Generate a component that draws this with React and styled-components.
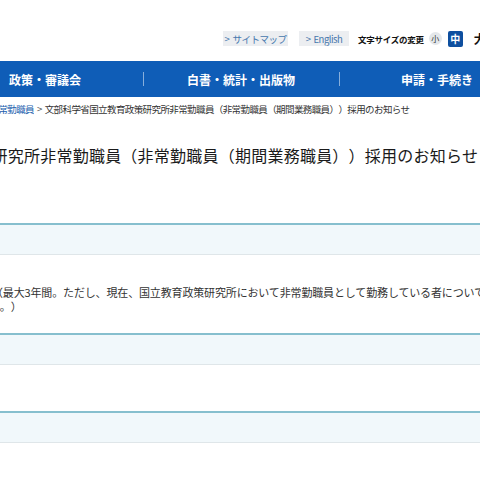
import React from "react";
import styled, { createGlobalStyle } from "styled-components";

const GlobalStyle = createGlobalStyle`
  html, body {
    margin: 0;
    padding: 0;
    background: #ffffff;
    overflow: hidden;
  }
  body {
    font-family: "Noto Sans CJK JP", "Noto Sans", sans-serif;
    color: #333333;
    text-spacing-trim: space-all;
  }
`;

// the page is wider than the window and scrolled sideways
const Page = styled.div`
  width: 980px;
  margin-left: -249px;
`;

const Header = styled.header`
  display: flex;
  align-items: center;
  height: 15px;
  padding-top: 31px;
`;

const Logo = styled.div`
  width: 460px;
  flex: none;
  padding-left: 10px;
  box-sizing: border-box;
  font-size: 14px;
  font-weight: 700;
  color: #222222;
`;

const UtilLinks = styled.div`
  display: flex;
  gap: 11px;
  margin-left: 12px;
`;

const UtilButton = styled.a`
  display: inline-flex;
  align-items: center;
  justify-content: center;
  gap: 3px;
  width: ${(p) => p.$w}px;
  height: 15px;
  background: #eceef1;
  color: #4677ad;
  font-size: 9.5px;
  letter-spacing: -0.5px;
  text-decoration: none;
  white-space: nowrap;
`;

const FontSize = styled.div`
  display: flex;
  align-items: center;
  margin-left: 9px;
`;

const FontLabel = styled.span`
  font-size: 8.5px;
  font-weight: 700;
  letter-spacing: -0.25px;
  color: #111111;
  margin-right: 5px;
  white-space: nowrap;
`;

const SizeSmall = styled.span`
  display: inline-flex;
  align-items: center;
  justify-content: center;
  width: 13px;
  height: 13px;
  border-radius: 50%;
  background: #e4e7ea;
  color: #333333;
  font-size: 8px;
  margin-right: 6px;
`;

const SizeMid = styled.span`
  display: inline-flex;
  align-items: center;
  justify-content: center;
  width: 15px;
  height: 16px;
  border-radius: 2px;
  background: #0e4f9f;
  color: #ffffff;
  font-size: 10px;
  font-weight: 700;
  margin-right: 11px;
`;

const SizeLarge = styled.span`
  font-size: 12px;
  font-weight: 700;
  color: #111111;
`;

const Nav = styled.nav`
  display: flex;
  height: 36px;
  margin-top: 15px;
  background: #0f5db7;
`;

const NavItem = styled.a`
  position: relative;
  flex: none;
  width: 196px;
  display: flex;
  align-items: center;
  justify-content: center;
  color: #ffffff;
  font-size: 12px;
  font-weight: 700;
  text-decoration: none;
  white-space: nowrap;

  & + &::before {
    content: "";
    position: absolute;
    left: 0;
    top: 11px;
    width: 1px;
    height: 14px;
    background: rgba(255, 255, 255, 0.5);
  }
`;

const Breadcrumb = styled.div`
  display: flex;
  align-items: center;
  height: 14px;
  padding-top: 5px;
  font-size: 9.5px;
  letter-spacing: -0.6px;
  white-space: nowrap;
`;

const Trail = styled.div`
  flex: none;
  width: 283px;
  display: flex;
  justify-content: flex-end;
  overflow: hidden;
`;

const Crumb = styled.a`
  color: #2160ad;
  text-decoration: none;
`;

const Sep = styled.span`
  margin: 0 3px;
  color: #555555;
`;

const Current = styled.span`
  color: #333333;
`;

const Title = styled.h1`
  margin: 27px 0 0;
  padding-left: 62px;
  font-size: 16px;
  font-weight: 400;
  line-height: 24px;
  letter-spacing: 0.23px;
  color: #1a1a1a;
  white-space: nowrap;
`;

const Sections = styled.div`
  margin-top: 56px;
`;

const Heading = styled.h2`
  margin: 0;
  height: 29px;
  padding-left: 72px;
  border-top: 2px solid #86bfce;
  border-bottom: 1px solid #dfe6e9;
  background: #f1f8fb;
  font-size: 12px;
  font-weight: 700;
  line-height: 29px;
  color: #333333;
`;

const Body = styled.div`
  min-height: ${(p) => p.$h}px;
  padding-left: 249px;
  box-sizing: border-box;
`;

const Para = styled.div`
  padding: ${(p) => p.$pad};
`;

const Line = styled.div`
  margin-left: ${(p) => p.$shift}px;
  font-size: 11px;
  line-height: 14px;
  letter-spacing: -0.15px;
  color: #333333;
  white-space: nowrap;
`;

export default function App() {
  return (
    <>
      <GlobalStyle />
      <Page>
        <Header>
          <Logo>文部科学省</Logo>
          <UtilLinks>
            <UtilButton href="#" $w={65}><span>&gt;</span>サイトマップ</UtilButton>
            <UtilButton href="#" $w={50}><span>&gt;</span>English</UtilButton>
          </UtilLinks>
          <FontSize>
            <FontLabel>文字サイズの変更</FontLabel>
            <SizeSmall>小</SizeSmall>
            <SizeMid>中</SizeMid>
            <SizeLarge>大</SizeLarge>
          </FontSize>
        </Header>

        <Nav>
          <NavItem href="#">報道・広報</NavItem>
          <NavItem href="#">政策・審議会</NavItem>
          <NavItem href="#">白書・統計・出版物</NavItem>
          <NavItem href="#">申請・手続き</NavItem>
          <NavItem href="#">文部科学省の紹介</NavItem>
        </Nav>

        <Breadcrumb>
          <Trail>
            <Crumb href="#">トップ</Crumb>
            <Sep>&gt;</Sep>
            <Crumb href="#">採用情報</Crumb>
            <Sep>&gt;</Sep>
            <Crumb href="#">非常勤職員</Crumb>
          </Trail>
          <Sep>&gt;</Sep>
          <Current>文部科学省国立教育政策研究所非常勤職員（非常勤職員（期間業務職員））採用のお知らせ</Current>
        </Breadcrumb>

        <Title>文部科学省国立教育政策研究所非常勤職員（非常勤職員（期間業務職員））採用のお知らせ</Title>

        <Sections>
          <Heading>募集内容</Heading>
          <Body $h={78}>
            <Para $pad="7px 0 9px">
              <Line $shift={-110}>任期あり</Line>
            </Para>
            <Para $pad="0 0 20px">
              <Line $shift={-8}>
                （最大3年間。ただし、現在、国立教育政策研究所において非常勤職員として勤務している者については、
              </Line>
              <Line $shift={-87}>この限りではない。）</Line>
            </Para>
          </Body>

          <Heading>応募方法</Heading>
          <Body $h={46} />

          <Heading>問い合わせ先</Heading>
          <Body $h={40} />
        </Sections>
      </Page>
    </>
  );
}
